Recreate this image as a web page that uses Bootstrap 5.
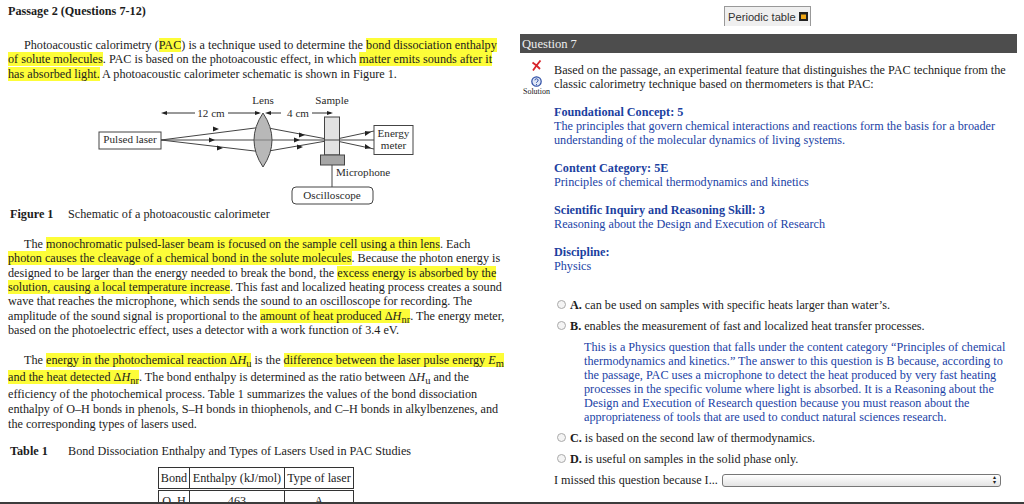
<!DOCTYPE html>
<html lang="en">
<head>
  <meta charset="UTF-8">
  <title>Passage 2 - Question 7</title>
  <link href="https://cdn.jsdelivr.net/npm/bootstrap@5.3.0/dist/css/bootstrap.min.css" rel="stylesheet">
  <style>
    html, body { height: 504px; overflow: hidden; background: #fff; }
    body { font-family: "Liberation Serif", "Times New Roman", serif; font-size: 12.2px; color: #1c1c1c; line-height: 14.3px; }
    sub { font-size: 10.5px; bottom: -.3em; }
    .page-frame { height: 504px; overflow: hidden; border-bottom: 2px solid #3c3c3c; }
    .pane-left { width: 512px; padding: 4px 0 0 8px; white-space: nowrap; flex: none; }
    .pane-right { flex: 1; padding: 6px 7px 0 8px; white-space: nowrap; min-width: 0; line-height: 14px; }
    .passage-head { font-weight: 700; margin: 0 0 20px; line-height: 14px; }
    .passage-text { margin: 0; }
    .passage-text.first { margin-bottom: 9px; }
    .indent { padding-left: 16px; display: inline-block; }
    .hl { background: #fdfd38; }
    .schem { display: block; margin: 0 0 2px 82px; }
    .schem text { font-family: "Liberation Serif", serif; font-size: 11.1px; fill: #2a2a2a; }
    .fig-cap { margin: 0 0 16px 2px; display: flex; }
    .fig-cap b { width: 58px; }
    .para-gap { margin-top: 15px; }
    .ln-17 { display: block; line-height: 17px; }
    .ln-16 { display: block; line-height: 16px; }
    .ln-14 { display: block; line-height: 14.500px; }
    .tbl-cap { margin: 13px 0 9px 2px; display: flex; line-height: 14px; }
    .tbl-cap b { width: 58px; }
    .laser-table { width: 196px; margin: 0 0 0 150px; border-collapse: collapse; }
    .laser-table th, .laser-table td { border: 1px solid #333; padding: 0; font-weight: 400; text-align: center; height: 22px; line-height: 15px; color: #1c1c1c; }
    .laser-table thead th { border-bottom: 3px double #333; }
    .ptable-btn { font-family: "Liberation Sans", Arial, sans-serif; font-size: 11.2px; color: #333; background: #efefef; border: 1px solid #999; border-bottom: 0; padding: 0 2px 0 3px; height: 20px; border-radius: 0; display: inline-flex; align-items: center; gap: 3px; margin-left: 204px; }
    .q-bar { background: #4d4d4d; color: #eee; font-size: 12.6px; height: 19px; line-height: 20px; padding-left: 2px; margin-top: 8px; margin-bottom: 10px; }
    .q-row { display: flex; height: 28px; }
    .q-icons { width: 34px; height: 38px; margin-top: -3px; flex: none; display: flex; flex-direction: column; align-items: center; padding-right: 1px; }
    .q-icons svg { flex: none; }
    .q-icon-help { margin-top: 5px; }
    .q-icons span { font-size: 8px; line-height: 9px; color: #222; }
    .topic { color: #1b43a6; margin: 0 0 14px 34px; }
    .topic b { font-weight: 700; display: block; color: #1b3f9f; }
    .topic.first { margin-top: 14px; }
    .topic.last { margin-bottom: 21px; }
    .ans { display: flex; align-items: center; height: 21px; margin-left: 37px; }
    .ans input { appearance: none; width: 9px; height: 9px; border: 1px solid #aaa; border-radius: 50%; background: #f4f4f4; margin-right: 4px; flex: none; }
    .ans b { margin-right: 3px; }
    .explain { color: #1b43a6; margin: 4px 0 3px 64px; }
    .miss-row { display: flex; align-items: center; margin: 4px 0 0 34px; gap: 4px; }
    .miss-select { width: 279px; height: 13px; border: 1px solid #777; border-radius: 3px; background: linear-gradient(#fff, #e4e4e4); display: flex; justify-content: flex-end; align-items: center; padding-right: 4px; font-size: 6px; line-height: 5px; color: #222; }
  </style>
</head>
<body>
  <div class="page-frame d-flex">

    <!-- passage side -->
    <div class="pane-left">
      <p class="passage-head">Passage 2 (Questions 7-12)</p>
      <p class="passage-text first"><span class="indent"></span>Photoacoustic calorimetry (<span class="hl">PAC</span>) is a technique used to determine the <span class="hl">bond dissociation enthalpy</span><br>
        <span class="hl">of solute molecules</span>. PAC is based on the photoacoustic effect, in which <span class="hl">matter emits sounds after it</span><br>
        <span class="hl">has absorbed light.</span> A photoacoustic calorimeter schematic is shown in Figure 1.</p>

      <svg class="schem" width="340" height="115" viewBox="90 90 340 115">
        <g stroke="#444" stroke-width="1" fill="none">
          <rect x="99" y="132" width="62" height="17"/>
          <rect x="374" y="125.500" width="39" height="29"/>
          <rect x="292" y="187" width="81" height="17" rx="4"/>
          <path d="M161 140L374 140"/>
          <path d="M161 140L263 127L332 140L374 131"/>
          <path d="M161 140L263 152L332 140L374 149"/>
          <path d="M332 165V187"/>
        </g>
        <path d="M263 113Q281 140 263 167Q245 140 263 113z" fill="#b8b8b8" stroke="#444"/>
        <path d="M254 140H272" stroke="#666" stroke-width=".7"/>
        <rect x="324.500" y="117" width="15" height="38" fill="#e2e2e2" stroke="#444"/>
        <path d="M324.500 140H339.500" stroke="#444"/>
        <rect x="320.500" y="155" width="24" height="10" fill="#a6a6a6" stroke="#444"/>
        <g fill="#222">
          <path d="M219 129l-6-2.500v5zM215 140l-6-2.500v5zM223 148l-6-2.500v5zM305 135l-6-2.500v5zM300 140l-6-2.500v5zM303 147l-6-2.500v5zM371 132l-6-1v5zM371 148l-6-4v5z"/>
        </g>
        <g stroke="#333" stroke-width="1" fill="none">
          <path d="M164 113H195M228 113H259M268 113H281M312 113H331"/>
        </g>
        <g fill="#222">
          <path d="M161 113l6-2v4zM261 113l-6-2v4zM265 113l6-2v4zM333 113l-6-2v4z"/>
        </g>
        <text x="263" y="104" text-anchor="middle">Lens</text>
        <text x="332" y="104" text-anchor="middle">Sample</text>
        <text x="211" y="117" text-anchor="middle">12 cm</text>
        <text x="298" y="117" text-anchor="middle">4 cm</text>
        <text x="130" y="143" text-anchor="middle">Pulsed laser</text>
        <text x="393.500" y="137" text-anchor="middle">Energy</text>
        <text x="393.500" y="149" text-anchor="middle">meter</text>
        <text x="336" y="176">Microphone</text>
        <text x="332" y="199" text-anchor="middle">Oscilloscope</text>
      </svg>

      <div class="fig-cap"><b>Figure 1</b><span>Schematic of a photoacoustic calorimeter</span></div>

      <p class="passage-text"><span class="indent"></span>The <span class="hl">monochromatic pulsed-laser beam is focused on the sample cell using a thin lens</span>. Each<br>
        <span class="hl">photon causes the cleavage of a chemical bond in the solute molecules</span>. Because the photon energy is<br>
        designed to be larger than the energy needed to break the bond, the <span class="hl">excess energy is absorbed by the</span><br>
        <span class="hl">solution, causing a local temperature increase</span>. This fast and localized heating process creates a sound<br>
        wave that reaches the microphone, which sends the sound to an oscilloscope for recording. The<br>
        amplitude of the sound signal is proportional to the <span class="hl">amount of heat produced Δ<i>H</i><sub>nr</sub></span>. The energy meter,<br>
        based on the photoelectric effect, uses a detector with a work function of 3.4 eV.</p>

      <div class="para-gap">
        <span class="ln-17"><span class="indent"></span>The <span class="hl">energy in the photochemical reaction Δ<i>H</i><sub>u</sub></span> is the <span class="hl">difference between the laser pulse energy <i>E</i><sub>m</sub></span></span>
        <span class="ln-17"><span class="hl">and the heat detected Δ<i>H</i><sub>nr</sub></span>. The bond enthalpy is determined as the ratio between Δ<i>H</i><sub>u</sub> and the</span>
        <span class="ln-16">efficiency of the photochemical process. Table 1 summarizes the values of the bond dissociation</span>
        <span class="ln-14">enthalpy of O–H bonds in phenols, S–H bonds in thiophenols, and C–H bonds in alkylbenzenes, and</span>
        <span class="ln-14">the corresponding types of lasers used.</span>
      </div>

      <div class="tbl-cap"><b>Table 1</b><span>Bond Dissociation Enthalpy and Types of Lasers Used in PAC Studies</span></div>

      <table class="laser-table">
        <thead><tr><th style="width:31px">Bond</th><th style="width:95px">Enthalpy (kJ/mol)</th><th>Type of laser</th></tr></thead>
        <tbody><tr><td>O–H</td><td>463</td><td>A</td></tr></tbody>
      </table>
    </div>

    <!-- question side -->
    <div class="pane-right">
      <button type="button" class="ptable-btn">Periodic table
        <svg width="9" height="9" viewBox="0 0 9 9"><rect width="9" height="9" fill="#222"/><rect x="2" y="2.500" width="5" height="4.500" fill="#f0a818"/></svg>
      </button>
      <div class="q-bar">Question 7</div>

      <div class="q-row">
        <div class="q-icons">
          <svg width="11" height="11" viewBox="0 0 11 11"><path d="M1.500 2.500L5.500 5.500L9.500 .5M5.500 5.500L2 10.500M5.500 5.500L9 9" stroke="#d8242a" stroke-width="1.800" fill="none"/></svg>
          <svg class="q-icon-help" width="11" height="11" viewBox="0 0 11 11"><circle cx="5.500" cy="5.500" r="4.700" fill="#dfe6f6" stroke="#2f4fa5" stroke-width="1.200"/><path d="M3.900 4.300a1.600 1.600 0 1 1 2.300 1.500c-.5.300-.7.500-.7 1M5.500 8v.9" stroke="#2f4fa5" fill="none"/></svg>
          <span>Solution</span>
        </div>
        <div>Based on the passage, an experimental feature that distinguishes the PAC technique from the<br>classic calorimetry technique based on thermometers is that PAC:</div>
      </div>

      <div class="topic first"><b>Foundational Concept: 5</b>The principles that govern chemical interactions and reactions form the basis for a broader<br>understanding of the molecular dynamics of living systems.</div>
      <div class="topic"><b>Content Category: 5E</b>Principles of chemical thermodynamics and kinetics</div>
      <div class="topic"><b>Scientific Inquiry and Reasoning Skill: 3</b>Reasoning about the Design and Execution of Research</div>
      <div class="topic last"><b>Discipline:</b>Physics</div>

      <div class="ans"><input type="radio" name="q7"><b>A.</b> can be used on samples with specific heats larger than water’s.</div>
      <div class="ans"><input type="radio" name="q7"><b>B.</b> enables the measurement of fast and localized heat transfer processes.</div>
      <div class="explain">This is a Physics question that falls under the content category “Principles of chemical<br>
        thermodynamics and kinetics.” The answer to this question is B because, according to<br>
        the passage, PAC uses a microphone to detect the heat produced by very fast heating<br>
        processes in the specific volume where light is absorbed. It is a Reasoning about the<br>
        Design and Execution of Research question because you must reason about the<br>
        appropriateness of tools that are used to conduct natural sciences research.</div>
      <div class="ans"><input type="radio" name="q7"><b>C.</b> is based on the second law of thermodynamics.</div>
      <div class="ans"><input type="radio" name="q7"><b>D.</b> is useful on samples in the solid phase only.</div>
      <div class="miss-row">I missed this question because I...
        <div class="miss-select"><span>▴<br>▾</span></div>
      </div>
    </div>
  </div>
  <script src="https://cdn.jsdelivr.net/npm/bootstrap@5.3.0/dist/js/bootstrap.bundle.min.js"></script>
</body>
</html>
